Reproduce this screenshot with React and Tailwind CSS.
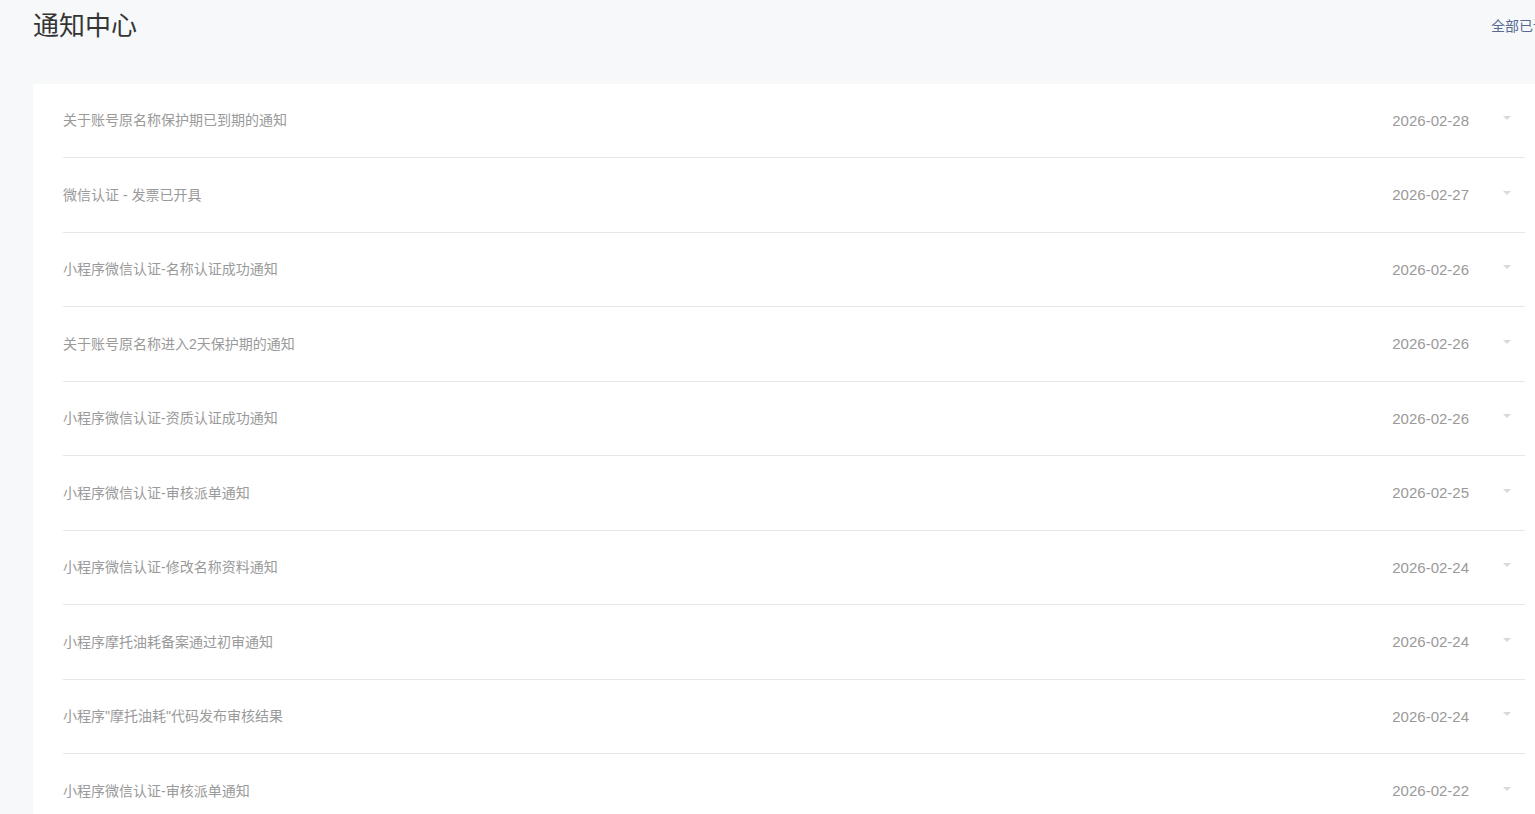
const items = [
  ['关于账号原名称保护期已到期的通知', '2026-02-28'],
  ['微信认证 - 发票已开具', '2026-02-27'],
  ['小程序微信认证-名称认证成功通知', '2026-02-26'],
  ['关于账号原名称进入2天保护期的通知', '2026-02-26'],
  ['小程序微信认证-资质认证成功通知', '2026-02-26'],
  ['小程序微信认证-审核派单通知', '2026-02-25'],
  ['小程序微信认证-修改名称资料通知', '2026-02-24'],
  ['小程序摩托油耗备案通过初审通知', '2026-02-24'],
  ['小程序"摩托油耗"代码发布审核结果', '2026-02-24'],
  ['小程序微信认证-审核派单通知', '2026-02-22'],
]

function Row({ title, date }) {
  return (
    <div className="h-[74.5px] border-b border-[#e7e7eb] flex items-center">
      <div className="flex-1 text-[14px] text-[#9a9a9a] pt-[1px]">{title}</div>
      <div className="text-[15px] text-[#9a9a9a] pt-[1px]">{date}</div>
      <div className="w-[56px] flex justify-end pr-[14px] -mt-[4px]">
        <span className="block w-0 h-0 border-l-[4px] border-r-[4px] border-t-[4px] border-l-transparent border-r-transparent border-t-[#d9d9d9]" />
      </div>
    </div>
  )
}

export default function App() {
  return (
    <div
      className="w-[1535px] h-[814px] overflow-hidden bg-[#f7f8fa]"
      style={{ fontFamily: '"Liberation Sans", "Noto Sans CJK SC", sans-serif' }}
    >
      <div className="ml-[33px] w-[1514px]">
        <div className="h-[83.5px] flex items-start justify-between">
          <h1 className="mt-[8px] text-[26px] leading-[36px] text-[#353535]">通知中心</h1>
          <a className="mt-[16px] text-[14px] leading-[20px] text-[#576b95]">全部已读</a>
        </div>
        <div className="bg-white rounded-[4px] pl-[30px] pr-[22px]">
          {items.map(([t, d], i) => (
            <Row key={i} title={t} date={d} />
          ))}
        </div>
      </div>
    </div>
  )
}
